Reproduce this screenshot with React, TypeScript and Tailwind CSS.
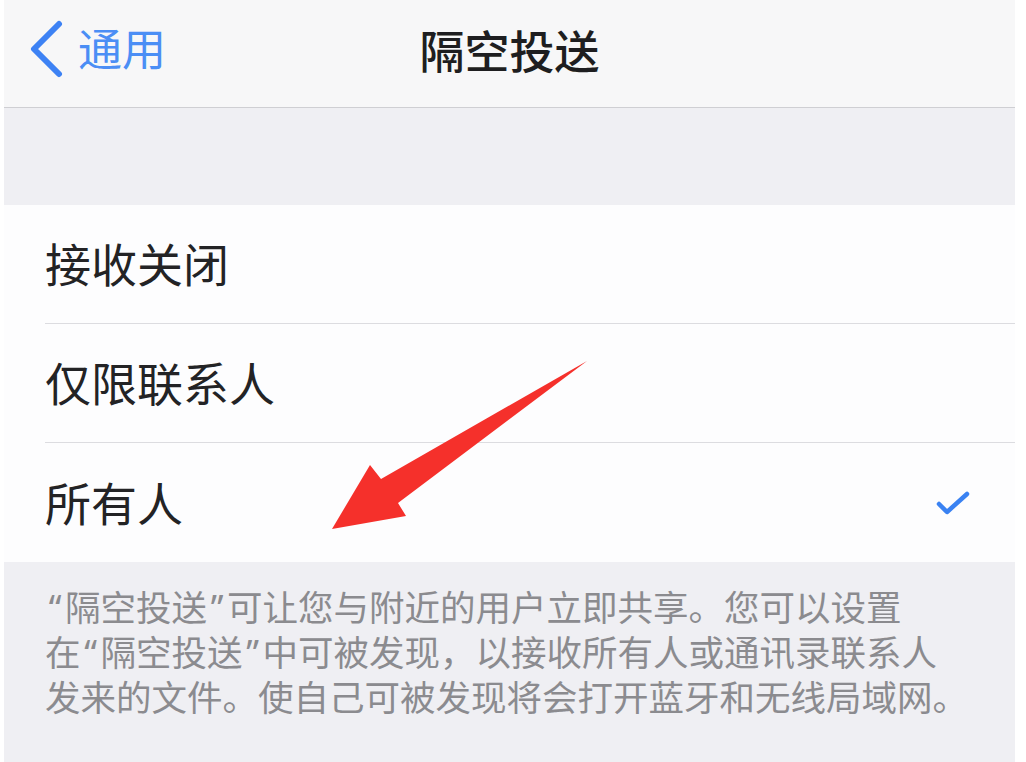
import React from 'react';

const options = [
  { label: '接收关闭', checked: false },
  { label: '仅限联系人', checked: false },
  { label: '所有人', checked: true },
];

// quotes in the reference are narrow (proportional), so they get their own span
const Q: React.FC<{ c: string }> = ({ c }) => (
  <span className="inline-block w-[20px] text-center font-['Noto_Sans',sans-serif]">{c}</span>
);

const App: React.FC = () => {
  return (
    <div className="relative w-[1026px] h-[762px] overflow-hidden bg-white font-['Noto_Sans_CJK_SC','Noto_Sans',sans-serif]">
      <div className="ml-[4px] mr-[11px] flex flex-col h-full">
        {/* nav bar */}
        <div className="relative h-[108px] bg-[#f7f7f8] border-b border-[#cfcfd3] flex items-center justify-center">
          <div className="absolute left-[24px] top-[20px] flex items-center gap-[10px]">
            <svg width="40" height="58" viewBox="0 0 40 58">
              <polyline points="31,4 6,29 31,54" fill="none" stroke="#3d82f4" strokeWidth="6" strokeLinecap="round" strokeLinejoin="round" />
            </svg>
            <span className="text-[44px] leading-none text-[#4b8ef5] -mt-[4px]">通用</span>
          </div>
          <span className="text-[45px] font-medium leading-none text-[#1e1e20] -mt-[8px]">隔空投送</span>
        </div>

        {/* spacer band */}
        <div className="h-[97px] bg-[#efeff3]" />

        {/* options */}
        <div className="bg-[#fdfdfe] pl-[41px]">
          {options.map((o, i) => (
            <div
              key={o.label}
              className={`h-[119px] flex items-center justify-between pr-[44px] ${i < options.length - 1 ? 'border-b border-[#dcdce0]' : ''}`}
            >
              <span className="text-[46px] leading-none text-[#232325] -mt-[4px]">{o.label}</span>
              {o.checked && (
                <svg width="36" height="26" viewBox="0 0 36 26">
                  <polyline points="4,14 12,22 32,4" fill="none" stroke="#3a82f2" strokeWidth="4.5" strokeLinecap="round" strokeLinejoin="round" />
                </svg>
              )}
            </div>
          ))}
        </div>

        {/* footer */}
        <div className="flex-1 bg-[#efeff3] pl-[41px] pt-[22px] text-[35.5px] leading-[44px] text-[#8b8b8f] whitespace-nowrap">
          <div>
            <Q c="“" />隔空投送<Q c="”" />可让您与附近的用户立即共享。您可以设置
          </div>
          <div>
            在<Q c="“" />隔空投送<Q c="”" />中可被发现，以接收所有人或通讯录联系人
          </div>
          <div>发来的文件。使自己可被发现将会打开蓝牙和无线局域网。</div>
        </div>
      </div>

      {/* red annotation arrow */}
      <svg className="absolute left-0 top-0 pointer-events-none" width="1026" height="762" viewBox="0 0 1026 762">
        <polygon points="587,361 398,503 406,516 332,529 370,465 381,479" fill="#f5302b" />
      </svg>
    </div>
  );
};

export default App;
